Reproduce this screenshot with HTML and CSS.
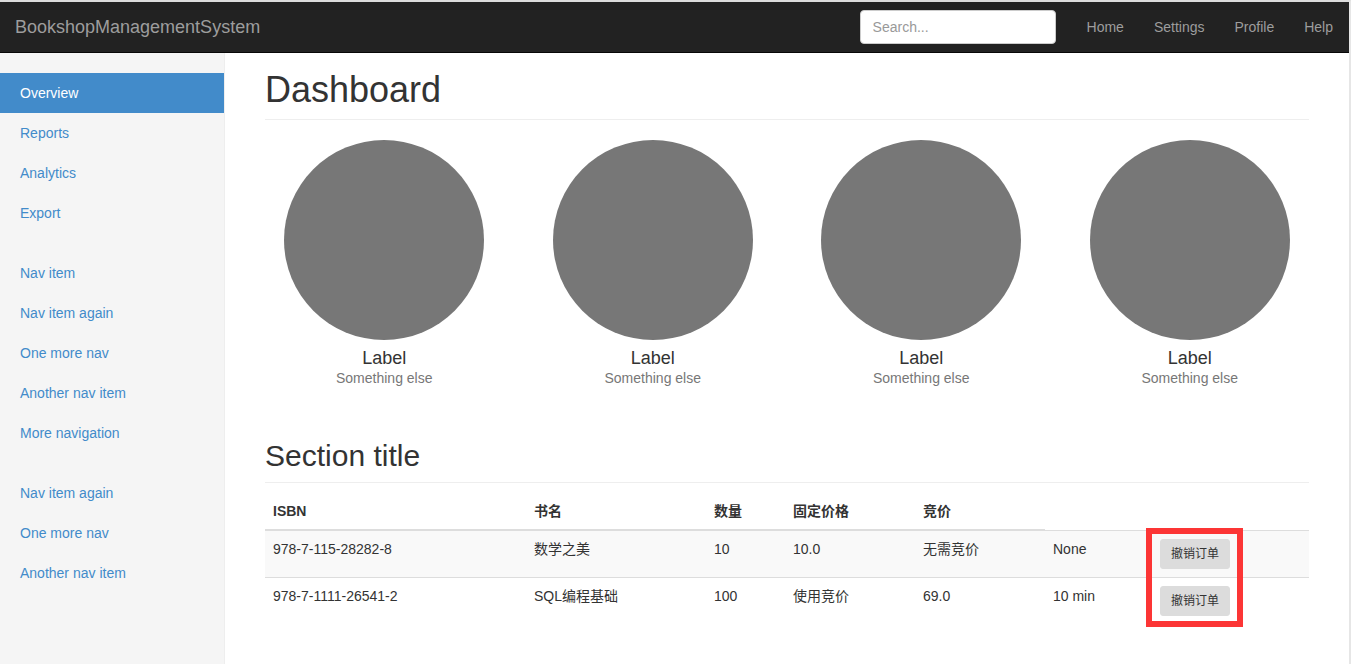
FILE: index.html
```html
<!DOCTYPE html>
<html lang="zh">
<head>
<meta charset="utf-8">
<title>BookshopManagementSystem</title>
<link rel="stylesheet" href="styles.css">
</head>
<body>
<nav class="navbar">
  <a class="brand" href="#">BookshopManagementSystem</a>
  <div class="navbar-right">
    <input class="search" type="text" placeholder="Search...">
    <ul class="top-links">
      <li><a href="#">Home</a></li>
      <li><a href="#">Settings</a></li>
      <li><a href="#">Profile</a></li>
      <li><a href="#">Help</a></li>
    </ul>
  </div>
</nav>
<div class="layout">
  <aside class="sidebar">
    <ul class="side-nav">
      <li class="active"><a href="#">Overview</a></li>
      <li><a href="#">Reports</a></li>
      <li><a href="#">Analytics</a></li>
      <li><a href="#">Export</a></li>
    </ul>
    <ul class="side-nav">
      <li><a href="#">Nav item</a></li>
      <li><a href="#">Nav item again</a></li>
      <li><a href="#">One more nav</a></li>
      <li><a href="#">Another nav item</a></li>
      <li><a href="#">More navigation</a></li>
    </ul>
    <ul class="side-nav">
      <li><a href="#">Nav item again</a></li>
      <li><a href="#">One more nav</a></li>
      <li><a href="#">Another nav item</a></li>
    </ul>
  </aside>
  <main class="main">
    <h1 class="page-header">Dashboard</h1>
    <div class="placeholders">
      <div class="placeholder">
        <div class="circle"></div>
        <h4>Label</h4>
        <span class="muted">Something else</span>
      </div>
      <div class="placeholder">
        <div class="circle"></div>
        <h4>Label</h4>
        <span class="muted">Something else</span>
      </div>
      <div class="placeholder">
        <div class="circle"></div>
        <h4>Label</h4>
        <span class="muted">Something else</span>
      </div>
      <div class="placeholder">
        <div class="circle"></div>
        <h4>Label</h4>
        <span class="muted">Something else</span>
      </div>
    </div>
    <h2 class="sub-header">Section title</h2>
    <div class="table-wrap">
      <table class="orders">
        <colgroup>
          <col class="c1"><col class="c2"><col class="c3"><col class="c4"><col class="c5"><col class="c6"><col class="c7">
        </colgroup>
        <thead>
          <tr><th>ISBN</th><th>书名</th><th>数量</th><th>固定价格</th><th>竞价</th></tr>
        </thead>
        <tbody>
          <tr class="odd">
            <td>978-7-115-28282-8</td><td>数学之美</td><td>10</td><td>10.0</td><td>无需竞价</td><td>None</td>
            <td><button class="btn" type="button">撤销订单</button></td>
          </tr>
          <tr>
            <td>978-7-1111-26541-2</td><td>SQL编程基础</td><td>100</td><td>使用竞价</td><td>69.0</td><td>10 min</td>
            <td><button class="btn" type="button">撤销订单</button></td>
          </tr>
        </tbody>
      </table>
      <div class="highlight"></div>
    </div>
  </main>
</div>
</body>
</html>
```

FILE: styles.css
```css
* { box-sizing: border-box; }
html { height: 100%; }
body {
  margin: 0;
  min-height: 100vh;
  border-top: 2px solid #dcdcdc;
  border-right: 2px solid #e6e6e6;
  font-family: "Liberation Sans", "Noto Sans CJK SC", sans-serif;
  font-size: 14px;
  line-height: 1.42857;
  color: #333;
  background: #fff;
  display: flex;
  flex-direction: column;
}
a { text-decoration: none; }
ul { list-style: none; margin: 0; padding: 0; }

.navbar {
  height: 51px;
  background: #222;
  border-bottom: 1px solid #080808;
  display: flex;
  align-items: center;
  justify-content: space-between;
  padding-left: 15px;
  flex-shrink: 0;
}
.brand {
  color: #9d9d9d;
  font-size: 18px;
  line-height: 20px;
}
.navbar-right {
  display: flex;
  align-items: center;
}
.search {
  width: 196px;
  height: 34px;
  border: 1px solid #ccc;
  border-radius: 4px;
  background: #fff;
  padding: 6px 12px;
  font-family: inherit;
  font-size: 14px;
  color: #555;
  margin-right: 16px;
}
.search::placeholder { color: #999; }
.top-links { display: flex; margin-right: 1px; }
.top-links a {
  display: block;
  padding: 15px;
  line-height: 20px;
  color: #9d9d9d;
}

.layout {
  flex: 1;
  display: flex;
}
.sidebar {
  width: 225px;
  flex-shrink: 0;
  background: #f5f5f5;
  border-right: 1px solid #eee;
  padding-top: 20px;
}
.side-nav { margin-bottom: 20px; }
.side-nav a {
  display: block;
  padding: 10px 20px;
  line-height: 20px;
  color: #428bca;
}
.side-nav .active a {
  background: #428bca;
  color: #fff;
}

.main {
  flex: 1;
  padding: 17px 40px 20px;
}
.page-header {
  margin: 0 0 20px;
  padding-bottom: 9px;
  border-bottom: 1px solid #eee;
  font-size: 36px;
  font-weight: 500;
  line-height: 1.1;
}
.placeholders {
  display: grid;
  grid-template-columns: repeat(4, 1fr);
  column-gap: 30px;
  margin-bottom: 30px;
  text-align: center;
}
.placeholder { margin-bottom: 20px; }
.circle {
  width: 200px;
  height: 200px;
  border-radius: 50%;
  background: #777;
  margin: 0 auto;
}
.placeholder h4 {
  margin: 9px 0 0;
  font-size: 18px;
  font-weight: 500;
  line-height: 1.1;
}
.muted { color: #777; display: block; margin-top: 1px; }
.sub-header {
  margin: 0 0 10px;
  padding-bottom: 10px;
  border-bottom: 1px solid #eee;
  font-size: 30px;
  font-weight: 500;
  line-height: 1.1;
}

.table-wrap { position: relative; }
.orders {
  width: 100%;
  border-collapse: collapse;
  border-spacing: 0;
  table-layout: fixed;
  margin-bottom: 20px;
}
.c1 { width: 261px; }
.c2 { width: 180px; }
.c3 { width: 79px; }
.c4 { width: 130px; }
.c5 { width: 130px; }
.c6 { width: 107px; }
.c7 { width: 157px; }
.orders th, .orders td {
  padding: 8px;
  line-height: 20px;
  text-align: left;
}
.orders th {
  vertical-align: bottom;
  font-weight: bold;
  border-bottom: 2px solid #ddd;
}
.orders td {
  vertical-align: top;
  border-top: 1px solid #ddd;
}
.orders .odd td { background: #f9f9f9; }
.btn {
  display: inline-block;
  padding: 5px 10px;
  font-family: "Liberation Sans", "Noto Sans CJK SC", sans-serif;
  font-size: 12px;
  line-height: 18px;
  color: #333;
  background: #dcdcdc;
  border: 1px solid #dcdcdc;
  border-radius: 3px;
}
.highlight {
  position: absolute;
  left: 881px;
  top: 35px;
  width: 97px;
  height: 99px;
  border: 6px solid #fc3535;
  pointer-events: none;
}
```
